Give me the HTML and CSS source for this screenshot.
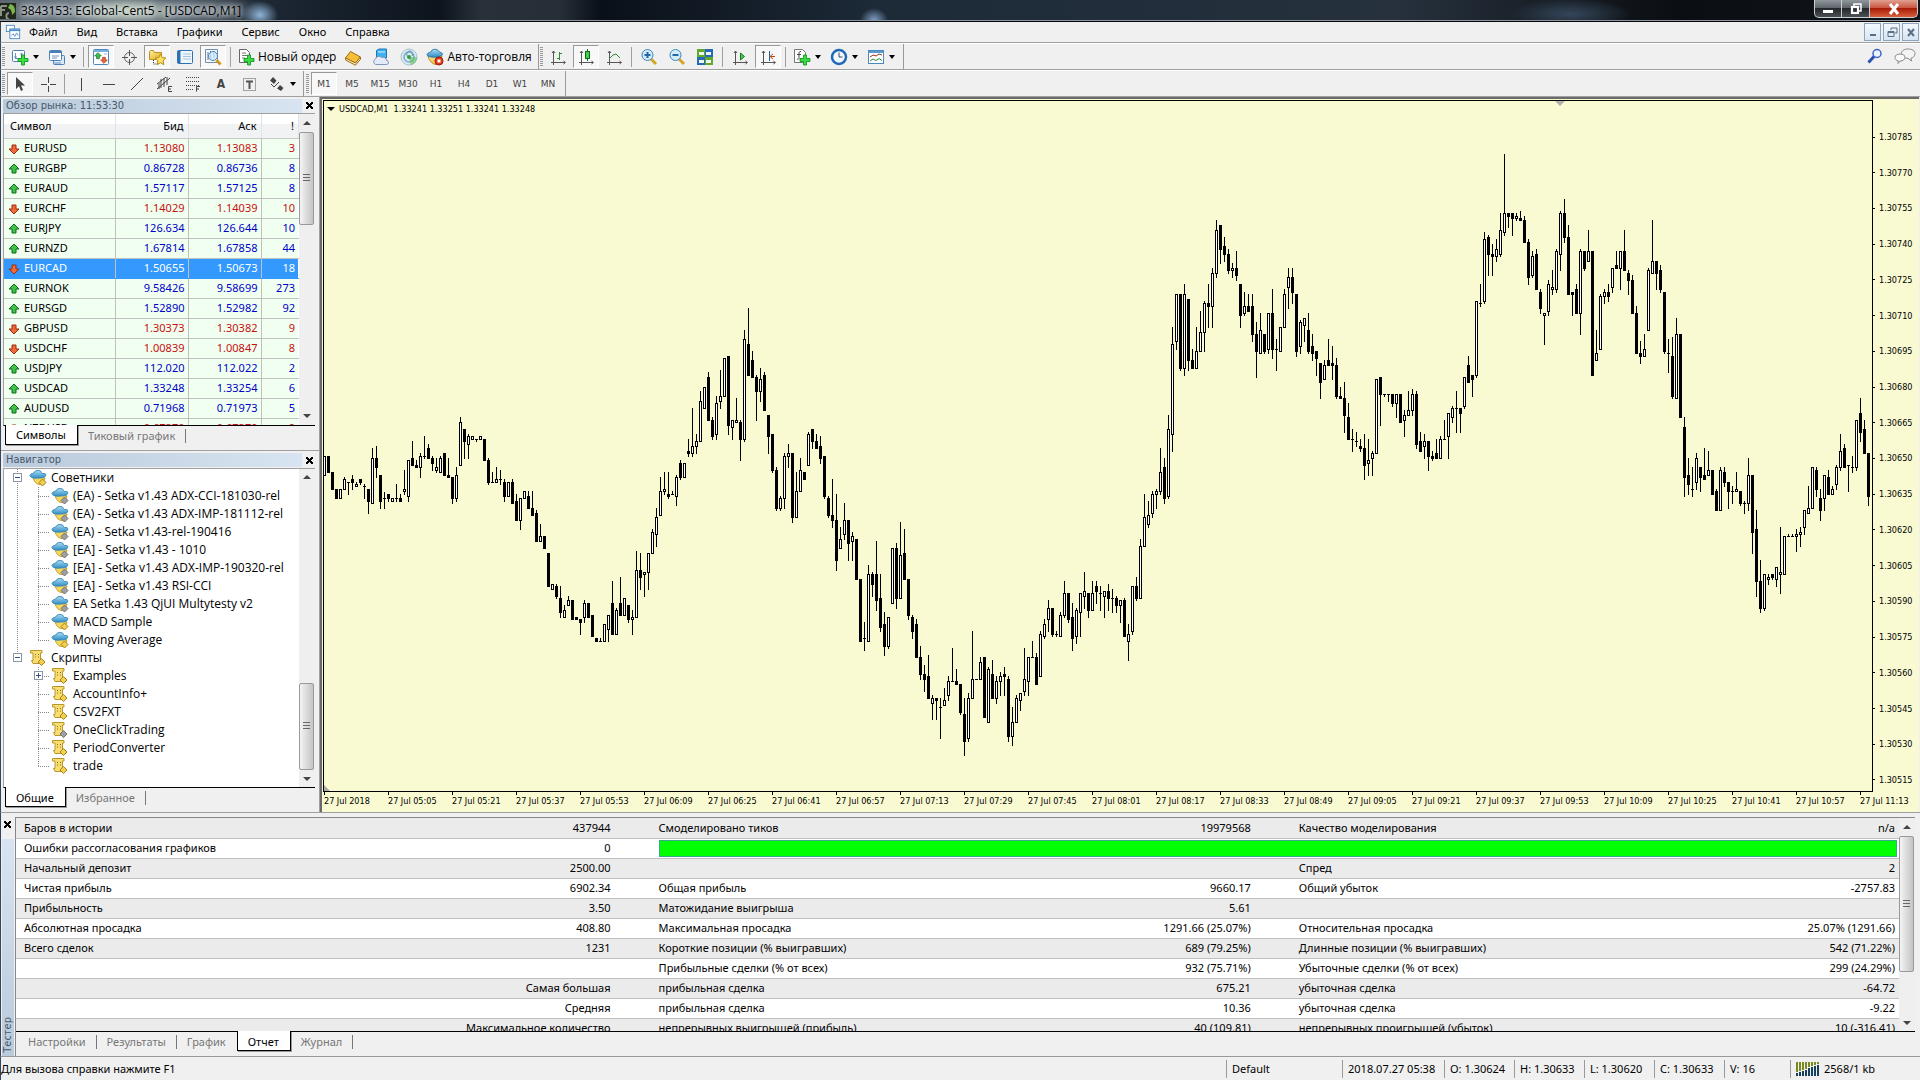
FILE: index.html
```html
<!DOCTYPE html>
<html lang="ru">
<head>
<meta charset="utf-8">
<title>3843153: EGlobal-Cent5 - [USDCAD,M1]</title>
<link rel="stylesheet" href="styles.css">
</head>
<body>
<svg class="defs" width="0" height="0" aria-hidden="true">
  <defs>
    <linearGradient id="gold" x1="0" y1="0" x2="1" y2="1"><stop offset="0" stop-color="#fff0a0"/><stop offset="1" stop-color="#e0a820"/></linearGradient>
    <linearGradient id="sky" x1="0" y1="0" x2="0" y2="1"><stop offset="0" stop-color="#a9dcf5"/><stop offset="1" stop-color="#2f8cc4"/></linearGradient>
    <symbol id="i-up" viewBox="0 0 12 12"><path d="M6 1 11 6H8v4H4V6H1z" fill="#3fc14a" stroke="#0d6b1a"/></symbol>
    <symbol id="i-down" viewBox="0 0 12 12"><path d="M6 11 1 6h3V2h4v4h3z" fill="#ef6a3a" stroke="#9c2c0c"/></symbol>
    <symbol id="i-plus" viewBox="0 0 12 12"><path d="M4.500 1h3v3.500H11v3H7.500V11h-3V7.500H1v-3h3.500z" fill="#35e040" stroke="#0a8a18" stroke-width=".8"/></symbol>
    <symbol id="i-chartwin" viewBox="0 0 18 18"><rect x="1.500" y="2.500" width="12" height="11" rx="1" fill="#fff" stroke="#4a80b8"/><path d="M4.500 5v6M3 9h3M4 10.500h8M10.500 5v6M9 6h3" stroke="#6a94c0" fill="none"/></symbol>
    <symbol id="i-newchart" viewBox="0 0 18 18"><use href="#i-chartwin" width="18" height="18"/><use href="#i-plus" x="6" y="6" width="12" height="12"/></symbol>
    <symbol id="i-profiles" viewBox="0 0 18 18"><rect x="5.500" y="7.500" width="11" height="9" rx="1" fill="#dbe9f8" stroke="#4a80b8"/><rect x="1.500" y="2.500" width="12" height="10" rx="1" fill="#fff" stroke="#4a80b8"/><path d="M1.500 4h12" stroke="#4a80b8" stroke-width="2"/><path d="M4 8h7M4 10h5M5 15h8" stroke="#6a94c0"/></symbol>
    <symbol id="i-market" viewBox="0 0 18 18"><rect x="1.500" y="1.500" width="15" height="15" rx="1" fill="#fff" stroke="#4a88c0"/><path d="M1.500 3h15" stroke="#7ab0dc" stroke-width="2"/><path d="M4 6h2M4 9h2M12 6h3M12 13h2" stroke="#9ab8d0"/><use href="#i-up" x="2" y="4" width="8" height="8"/><use href="#i-down" x="8" y="8" width="8" height="8"/></symbol>
    <symbol id="i-target" viewBox="0 0 18 18"><circle cx="9.500" cy="9.500" r="5" fill="none" stroke="#666"/><path d="M9.500 2v6M9.500 11v6M2 9.500h6M11 9.500h6" stroke="#555"/></symbol>
    <symbol id="i-navigator" viewBox="0 0 18 18"><path d="M1.500 3.500v8h12v-7h-7l-1-2h-3z" fill="url(#gold)" stroke="#c09020"/><path d="M5.500 12v4h4" fill="none" stroke="#333" stroke-dasharray="1 1"/><path d="m12.500 6 1.700 3.600 3.600.4-2.700 2.700.7 4-3.300-2-3.300 2 .7-4L7 10l3.800-.4z" fill="#ffe066" stroke="#b88a10"/></symbol>
    <symbol id="i-terminal" viewBox="0 0 18 18"><rect x="1.500" y="2.500" width="15" height="13" rx="1" fill="#eef6fd" stroke="#2f70b0"/><path d="M3 3v12" stroke="#2f70b0" stroke-width="3"/><path d="M7 6h8M7 8.500h8M7 11h8" stroke="#a8c4dc"/></symbol>
    <symbol id="i-tester" viewBox="0 0 18 18"><path d="M1.500 1.500h12v13h-12z" fill="#f4f8fc" stroke="#7090b0"/><path d="M4 4v8M6.500 3v7M10 3v7" stroke="#5a7a9a"/><circle cx="9" cy="8" r="4.500" fill="#cfe8fa" fill-opacity=".8" stroke="#4c88bc"/><path d="m12.500 12 4 4.500" stroke="#d49a20" stroke-width="3"/></symbol>
    <symbol id="i-order" viewBox="0 0 18 18"><path d="M2.500 1.500h7l3 3v10h-10z" fill="#fff" stroke="#666"/><path d="M5 5h4M5 7.500h5M5 10h3" stroke="#777"/><use href="#i-plus" x="6" y="6" width="12" height="12"/></symbol>
    <symbol id="i-book" viewBox="0 0 18 18"><path d="m1.500 10 5-6.500 10 5.500-5 6z" fill="#f5bf3a" stroke="#a06a10"/><path d="m1.500 10 .3 2.200 9.700 5 5-6V9l-5 6z" fill="#fff3c8" stroke="#a06a10"/></symbol>
    <symbol id="i-cloud" viewBox="0 0 18 18"><path d="M4.500 2.500 7 1h7.500v9h-10z" fill="#3fb0f0" stroke="#1a78b8"/><path d="M6 4h7" stroke="#d8f0ff"/><path d="M3.500 16.500a3 3 0 0 1 0-5.500 3.500 3.500 0 0 1 6-1.500 3.500 3.500 0 0 1 5 3 2 2 0 0 1 0 4z" fill="#e3ebf8" stroke="#7f96bd"/></symbol>
    <symbol id="i-signal" viewBox="0 0 18 18"><circle cx="9" cy="9" r="8" fill="#dceaf0" stroke="#a8c4d4"/><circle cx="9" cy="9" r="5" fill="none" stroke="#7aaccc" stroke-width="1.500"/><path d="M9 9a3 3 0 1 1 3-1" fill="none" stroke="#5a90b4"/><path d="M9 9c0 3 1 5 2 8 4-1 6-4 6-8" fill="#6cc070" fill-opacity=".7"/><circle cx="9" cy="9" r="2" fill="#2e9e40"/></symbol>
    <symbol id="i-auto" viewBox="0 0 18 18"><path d="M2 8c1 5 5 8.500 8 8.500s5-4 6-8.500z" fill="url(#gold)" stroke="#b88a20"/><path d="M1 6.500C2 4 5 5 5.500 3S11 .5 12.500 3s4 1 4 3.500S2 11 1 6.500z" fill="url(#sky)" stroke="#2878a8"/><circle cx="13" cy="13" r="4" fill="#e03a1c" stroke="#a01c08"/><rect x="11.500" y="11.500" width="3" height="3" fill="#fff"/></symbol>
    <symbol id="i-axes" viewBox="0 0 18 18"><path d="M4.500 3v14M2 14.500h14M3 5l1.500-2L6 5M14.500 13l2 1.500-2 1.500" fill="none" stroke="#555"/></symbol>
    <symbol id="i-bars" viewBox="0 0 18 18"><use href="#i-axes" width="18" height="18"/><path d="M10.500 4v8M8 10.500h2.500M10.500 5.500H13" stroke="#2d8a35" fill="none"/></symbol>
    <symbol id="i-candle" viewBox="0 0 18 18"><use href="#i-axes" width="18" height="18"/><path d="M10.500 1v12" stroke="#0c6a18"/><rect x="8.500" y="3.500" width="4" height="7" fill="#3cd04a" stroke="#0c6a18"/></symbol>
    <symbol id="i-line" viewBox="0 0 18 18"><use href="#i-axes" width="18" height="18"/><path d="m4 11 4-4 3-1 4 4" stroke="#2d8a35" fill="none"/></symbol>
    <symbol id="i-zoomin" viewBox="0 0 18 18"><path d="m11 11 5 5" stroke="#d4a52c" stroke-width="3"/><circle cx="7.500" cy="7" r="5.500" fill="#d4ecfa" stroke="#3f86c0"/><path d="M4.500 7h6M7.500 4v6" stroke="#2068a8" stroke-width="2"/></symbol>
    <symbol id="i-zoomout" viewBox="0 0 18 18"><path d="m11 11 5 5" stroke="#d4a52c" stroke-width="3"/><circle cx="7.500" cy="7" r="5.500" fill="#d4ecfa" stroke="#3f86c0"/><path d="M4.500 7h6" stroke="#2068a8" stroke-width="2"/></symbol>
    <symbol id="i-tile" viewBox="0 0 18 18"><path d="M1 1h8v8H1z" fill="#62a82a"/><path d="M9 1h8v8H9z" fill="#2868b8"/><path d="M1 9h8v8H1z" fill="#2868b8"/><path d="M9 9h8v8H9z" fill="#62a82a"/><path d="M3 4h5v3H3zM10 4h5v3h-5zM3 12h5v3H3zM10 12h5v3h-5z" fill="#f0f6f0"/></symbol>
    <symbol id="i-scroll" viewBox="0 0 18 18"><use href="#i-axes" width="18" height="18"/><path d="m9.500 5 4 3.500-4 3.500z" fill="#4cc858" stroke="#157a20"/></symbol>
    <symbol id="i-shift" viewBox="0 0 18 18"><use href="#i-axes" width="18" height="18"/><path d="M10.500 3v10" stroke="#2060a0"/><path d="M16 8.500h-4M14 6l-3 2.500 3 2.500" stroke="#c04010" fill="none"/></symbol>
    <symbol id="i-indic" viewBox="0 0 18 18"><path d="M1.500 1.500h8l3 3v10h-11z" fill="#fff" stroke="#777"/><path d="M8 3.500c-2-.5-2 1-2 3v3c0 2-1 2-2 1.500M4 6.500h4" stroke="#444" fill="none"/><use href="#i-plus" x="6" y="6" width="12" height="12"/></symbol>
    <symbol id="i-clock" viewBox="0 0 18 18"><circle cx="9" cy="9" r="7" fill="#f2f8ff" stroke="#1f68b4" stroke-width="2.500"/><path d="M9 4.500V9h3.500" stroke="#444" fill="none"/></symbol>
    <symbol id="i-template" viewBox="0 0 18 18"><rect x="1.500" y="2.500" width="15" height="13" fill="#fff" stroke="#4a88c0"/><path d="M1.500 4h15" stroke="#5a9ad0" stroke-width="2"/><path d="m3 9 3-2 3 1 3-2 3 1" stroke="#a03018" fill="none"/><path d="m3 13 3-2 3 1.500 3-2 3 2" stroke="#2d8a35" fill="none"/></symbol>
    <symbol id="i-cursor" viewBox="0 0 18 18"><path d="M5 2v12l3-2.800 2 4.800 2-1-2-4.600h4z" fill="#444"/></symbol>
    <symbol id="i-cross" viewBox="0 0 18 18"><path d="M9.500 2v6M9.500 11v6M2 9.500h6M11 9.500h6" stroke="#444"/></symbol>
    <symbol id="i-vline" viewBox="0 0 18 18"><path d="M9.500 3v13" stroke="#444"/></symbol>
    <symbol id="i-hline" viewBox="0 0 18 18"><path d="M3 9.500h12" stroke="#444"/></symbol>
    <symbol id="i-trend" viewBox="0 0 18 18"><path d="M3 15 15 3" stroke="#444"/></symbol>
    <symbol id="i-channel" viewBox="0 0 18 18"><path d="M1 9 10 2M1 14 14 3M5 4v9M8 3v9M11 2v8M3 8v6" stroke="#444"/><path d="M16 11.500h-3.500v5H16M12.500 14H15" stroke="#444" fill="none"/></symbol>
    <symbol id="i-fibo" viewBox="0 0 18 18"><path d="M2 2.500h14M2 6.500h14M2 10.500h14M2 14.500h8" stroke="#444" stroke-dasharray="1 1"/><path d="M16 11.500h-3.500v5M12.500 14H15" stroke="#444" fill="none"/></symbol>
    <symbol id="i-label" viewBox="0 0 18 18"><rect x="3.500" y="3.500" width="12" height="12" fill="none" stroke="#555" stroke-dasharray="1 1"/><path d="M6 6.500h7M9.500 6v8" stroke="#555" stroke-width="2" fill="none"/></symbol>
    <symbol id="i-shapes" viewBox="0 0 18 18"><path d="m5 2 3.500 3.500L6 9 2 5.500zM12 10l3.500 3L13 16l-4-2.500z" fill="#444"/><path d="m3 9 3 3 5-5" stroke="#444" fill="none"/></symbol>
    <symbol id="i-search" viewBox="0 0 18 18"><circle cx="11" cy="6.500" r="4" fill="#eef4ff" stroke="#3a66c8" stroke-width="1.500"/><path d="m8 9.500-5.500 6" stroke="#2a4fb0" stroke-width="3"/></symbol>
    <symbol id="i-chat" viewBox="0 0 22 18"><path d="M14 2c4 0 7 1.800 7 4.500S18.500 11 17 11.200L17.500 14 14 11.300c-4 0-6.500-2-6.500-4.800S10 2 14 2z" fill="#f4f4f4" stroke="#888"/><path d="M6 7c3 0 5 1.400 5 3.400S9 14 6 14l-2 2.500.2-2.700C2 13.500 1 12 1 10.400 1 8.400 3 7 6 7z" fill="#fafafa" stroke="#888"/></symbol>
    <symbol id="i-ea" viewBox="0 0 18 18"><path d="M4 8c1 5 4 7.500 7 7.500 2 0 4-3 5-6.500z" fill="#f6d85a" stroke="#c09a28"/><path d="M1 6.500C1.500 4 5 5 5.500 3S11 1 12 2.500 12.500 5 15 4.500s2.500 3.500-1 4S2 10.500 1 6.500z" fill="url(#sky)" stroke="#3a8cba"/><path d="m13.500 10 3.500 3.500-3.500 3.500L10 13.500z" fill="var(--mark)" stroke="var(--edge)"/></symbol>
    <symbol id="i-script" viewBox="0 0 18 18"><path d="M1.500 1.500h11.500v2.500h-1.500v7h2.500v3.500H4L2.500 11.500H4V4H1.500z" fill="#f7dd72" stroke="#b8962a"/><path d="M6 5.500h1M9 5.500h1M6 8h1M9 8h1" stroke="#906c10"/><path d="m12.500 9.500 3.500 3.500-3.500 3.500L9 13z" fill="var(--mark)" stroke="var(--edge)"/></symbol>
  </defs>
</svg>

<div class="app">
  <header class="titlebar">
    <svg class="logo" viewBox="0 0 16 16" aria-hidden="true"><path d="M0 0h16v16H0z" fill="#20261c"/><path d="M1 3h6M1 3v10M1 7h4M9 10c-3 0-4 6 0 6" stroke="#8a9284" stroke-width="2" fill="none"/><path d="M10 1c4 1 5 3 5 8l-3 3c0-5-2-6-4-7z" fill="#7ab648"/></svg>
    <h1>3843153: EGlobal-Cent5 - [USDCAD,M1]</h1>
    <div class="caption">
      <button aria-label="Свернуть"><svg viewBox="0 0 12 12"><path d="M1 7h10v3H1z" fill="#fff"/></svg></button>
      <button aria-label="Развернуть"><svg viewBox="0 0 12 12"><path d="M4 3V1h7v7H9" stroke="#fff" stroke-width="1.500" fill="none"/><rect x="2" y="4" width="6" height="6" stroke="#fff" stroke-width="2.200" fill="none"/></svg></button>
      <button class="close" aria-label="Закрыть"><svg viewBox="0 0 12 12"><path d="m2 1 8 10M10 1 2 11" stroke="#fff" stroke-width="3"/></svg></button>
    </div>
  </header>

  <nav class="menubar">
    <svg class="icon16" viewBox="0 0 18 18" aria-hidden="true"><rect x="1.500" y="1.500" width="9" height="7" fill="#fff" stroke="#4a88c8"/><rect x="5.500" y="5.500" width="11" height="11" fill="#fff" stroke="#4a88c8"/><path d="M5 7h12" stroke="#4a88c8" stroke-width="2"/><path d="m7 13 2-2 2 3 2-4 2 3" stroke="#4a88c8" fill="none"/></svg>
    <a href="#">Файл</a><a href="#">Вид</a><a href="#">Вставка</a><a href="#">Графики</a><a href="#">Сервис</a><a href="#">Окно</a><a href="#">Справка</a>
    <div class="mdi">
      <button aria-label="Свернуть график"><svg viewBox="0 0 12 12"><path d="M3 8h6v2H3z" fill="#5a6e82"/></svg></button>
      <button aria-label="Восстановить график"><svg viewBox="0 0 12 12"><path d="M5 4V2h6v5H9M2 5.500h6v5H2zM2 6.500h6" stroke="#5a6e82" fill="none"/></svg></button>
      <button aria-label="Закрыть график"><svg viewBox="0 0 12 12"><path d="m3 3 6 7M9 3l-6 7" stroke="#5a6e82" stroke-width="2"/></svg></button>
    </div>
  </nav>

  <div class="toolrow">
    <div class="toolbar">
      <span class="grip"></span>
      <button class="drop" aria-label="Новый график"><svg><use href="#i-newchart"/></svg></button>
      <button class="drop" aria-label="Профили"><svg><use href="#i-profiles"/></svg></button>
      <span class="sep"></span>
      <button class="on" aria-label="Обзор рынка"><svg><use href="#i-market"/></svg></button>
      <button aria-label="Окно данных"><svg><use href="#i-target"/></svg></button>
      <button class="on" aria-label="Навигатор"><svg><use href="#i-navigator"/></svg></button>
      <button aria-label="Терминал"><svg><use href="#i-terminal"/></svg></button>
      <button class="on" aria-label="Тестер стратегий"><svg><use href="#i-tester"/></svg></button>
      <span class="sep"></span>
      <button class="wide"><svg><use href="#i-order"/></svg>Новый ордер</button>
      <button aria-label="MetaEditor"><svg><use href="#i-book"/></svg></button>
      <button aria-label="Маркет"><svg><use href="#i-cloud"/></svg></button>
      <button aria-label="Сигналы"><svg><use href="#i-signal"/></svg></button>
      <button class="wide"><svg><use href="#i-auto"/></svg>Авто-торговля</button>
    </div>
    <div class="toolbar">
      <span class="grip"></span>
      <button aria-label="Бары"><svg><use href="#i-bars"/></svg></button>
      <button class="on" aria-label="Японские свечи"><svg><use href="#i-candle"/></svg></button>
      <button aria-label="Линия"><svg><use href="#i-line"/></svg></button>
      <span class="sep"></span>
      <button aria-label="Увеличить"><svg><use href="#i-zoomin"/></svg></button>
      <button aria-label="Уменьшить"><svg><use href="#i-zoomout"/></svg></button>
      <button aria-label="Окна мозаикой"><svg><use href="#i-tile"/></svg></button>
      <span class="sep"></span>
      <button aria-label="Автопрокрутка"><svg><use href="#i-scroll"/></svg></button>
      <button class="on" aria-label="Сдвиг графика"><svg><use href="#i-shift"/></svg></button>
      <span class="sep"></span>
      <button class="drop" aria-label="Индикаторы"><svg><use href="#i-indic"/></svg></button>
      <button class="drop" aria-label="Периоды"><svg><use href="#i-clock"/></svg></button>
      <button class="drop" aria-label="Шаблоны"><svg><use href="#i-template"/></svg></button>
    </div>
    <div class="corner">
      <button aria-label="Поиск"><svg><use href="#i-search"/></svg></button>
      <button class="chat" aria-label="Чат"><svg><use href="#i-chat"/></svg></button>
    </div>
  </div>

  <div class="toolrow tight">
    <div class="toolbar">
      <span class="grip"></span>
      <button class="on" aria-label="Курсор"><svg><use href="#i-cursor"/></svg></button>
      <button aria-label="Перекрестие"><svg><use href="#i-cross"/></svg></button>
      <span class="sep"></span>
      <button aria-label="Вертикальная линия"><svg><use href="#i-vline"/></svg></button>
      <button aria-label="Горизонтальная линия"><svg><use href="#i-hline"/></svg></button>
      <button aria-label="Трендовая линия"><svg><use href="#i-trend"/></svg></button>
      <button aria-label="Канал"><svg><use href="#i-channel"/></svg></button>
      <button aria-label="Фибоначчи"><svg><use href="#i-fibo"/></svg></button>
      <button class="letter">A</button>
      <button aria-label="Метка"><svg><use href="#i-label"/></svg></button>
      <button class="drop" aria-label="Стрелки"><svg><use href="#i-shapes"/></svg></button>
    </div>
    <div class="toolbar frames">
      <span class="grip"></span>
      <button class="on">M1</button><button>M5</button><button>M15</button><button>M30</button><button>H1</button><button>H4</button><button>D1</button><button>W1</button><button>MN</button>
    </div>
  </div>

  <main class="work">
    <aside class="dock">
      <section class="panel">
        <header class="paneltitle"><h2>Обзор рынка: 11:53:30</h2><button class="x" aria-label="Закрыть панель"></button></header>
        <div class="body">
          <div class="view">
            <table class="quotes">
              <colgroup><col class="c-sym"><col class="c-bid"><col class="c-bid"><col></colgroup>
              <thead><tr><th>Символ</th><th>Бид</th><th>Аск</th><th>!</th></tr></thead>
              <tbody>
                <tr class="down"><td><svg><use href="#i-down"/></svg>EURUSD</td><td>1.13080</td><td>1.13083</td><td>3</td></tr>
                <tr><td><svg><use href="#i-up"/></svg>EURGBP</td><td>0.86728</td><td>0.86736</td><td>8</td></tr>
                <tr><td><svg><use href="#i-up"/></svg>EURAUD</td><td>1.57117</td><td>1.57125</td><td>8</td></tr>
                <tr class="down"><td><svg><use href="#i-down"/></svg>EURCHF</td><td>1.14029</td><td>1.14039</td><td>10</td></tr>
                <tr><td><svg><use href="#i-up"/></svg>EURJPY</td><td>126.634</td><td>126.644</td><td>10</td></tr>
                <tr><td><svg><use href="#i-up"/></svg>EURNZD</td><td>1.67814</td><td>1.67858</td><td>44</td></tr>
                <tr class="sel"><td><svg><use href="#i-down"/></svg>EURCAD</td><td>1.50655</td><td>1.50673</td><td>18</td></tr>
                <tr><td><svg><use href="#i-up"/></svg>EURNOK</td><td>9.58426</td><td>9.58699</td><td>273</td></tr>
                <tr><td><svg><use href="#i-up"/></svg>EURSGD</td><td>1.52890</td><td>1.52982</td><td>92</td></tr>
                <tr class="down"><td><svg><use href="#i-down"/></svg>GBPUSD</td><td>1.30373</td><td>1.30382</td><td>9</td></tr>
                <tr class="down"><td><svg><use href="#i-down"/></svg>USDCHF</td><td>1.00839</td><td>1.00847</td><td>8</td></tr>
                <tr><td><svg><use href="#i-up"/></svg>USDJPY</td><td>112.020</td><td>112.022</td><td>2</td></tr>
                <tr><td><svg><use href="#i-up"/></svg>USDCAD</td><td>1.33248</td><td>1.33254</td><td>6</td></tr>
                <tr><td><svg><use href="#i-up"/></svg>AUDUSD</td><td>0.71968</td><td>0.71973</td><td>5</td></tr>
                <tr class="down"><td><svg><use href="#i-down"/></svg>NZDUSD</td><td>0.67370</td><td>0.67379</td><td>9</td></tr>
              </tbody>
            </table>
          </div>
          <div class="scroll"><i class="arrow"></i><div class="track"><i class="thumb t-quotes"></i></div><i class="arrow dn"></i></div>
        </div>
        <div class="tabs"><button class="active">Символы</button><button>Тиковый график</button></div>
      </section>

      <section class="panel">
        <header class="paneltitle"><h2>Навигатор</h2><button class="x" aria-label="Закрыть панель"></button></header>
        <div class="body">
          <div class="view">
            <ul class="tree">
              <li class="root"><div class="node"><span class="box"></span><svg><use href="#i-ea"/></svg>Советники</div>
                <ul>
                  <li class="off"><svg><use href="#i-ea"/></svg>(EA) - Setka v1.43 ADX-CCI-181030-rel</li>
                  <li class="off"><svg><use href="#i-ea"/></svg>(EA) - Setka v1.43 ADX-IMP-181112-rel</li>
                  <li class="off"><svg><use href="#i-ea"/></svg>(EA) - Setka v1.43-rel-190416</li>
                  <li class="off"><svg><use href="#i-ea"/></svg>[EA] - Setka v1.43 - 1010</li>
                  <li class="off"><svg><use href="#i-ea"/></svg>[EA] - Setka v1.43 ADX-IMP-190320-rel</li>
                  <li class="off"><svg><use href="#i-ea"/></svg>[EA] - Setka v1.43 RSI-CCI</li>
                  <li class="off"><svg><use href="#i-ea"/></svg>EA Setka 1.43 QjUI Multytesty v2</li>
                  <li><svg><use href="#i-ea"/></svg>MACD Sample</li>
                  <li><svg><use href="#i-ea"/></svg>Moving Average</li>
                </ul>
              </li>
              <li class="root last"><div class="node"><span class="box"></span><svg><use href="#i-script"/></svg>Скрипты</div>
                <ul>
                  <li class="folder"><span class="box plus"></span><svg><use href="#i-script"/></svg>Examples</li>
                  <li><svg><use href="#i-script"/></svg>AccountInfo+</li>
                  <li><svg><use href="#i-script"/></svg>CSV2FXT</li>
                  <li class="off"><svg><use href="#i-script"/></svg>OneClickTrading</li>
                  <li><svg><use href="#i-script"/></svg>PeriodConverter</li>
                  <li><svg><use href="#i-script"/></svg>trade</li>
                </ul>
              </li>
            </ul>
          </div>
          <div class="scroll"><i class="arrow"></i><div class="track end"><i class="thumb t-nav"></i></div><i class="arrow dn"></i></div>
        </div>
        <div class="tabs"><button class="active">Общие</button><button>Избранное</button></div>
      </section>
    </aside>

    <section class="chart">
      <div class="plot">
        <p class="legend">USDCAD,M1&nbsp; 1.33241 1.33251 1.33241 1.33248</p>
        <svg id="candles" class="candles" role="img" aria-label="USDCAD M1"></svg>
        <i class="shiftmark"></i><i class="startmark"></i>
      </div>
      <div class="prices" id="prices"></div>
      <div class="times" id="times"></div>
    </section>
  </main>

  <section class="tester">
    <div class="side"><button class="x" aria-label="Закрыть тестер"></button><h2>Тестер</h2></div>
    <div class="report">
      <div class="body">
        <div class="view">
          <table class="stats">
            <colgroup><col class="s1"><col class="s2"><col class="s3"><col class="s4"><col class="s5"><col class="s6"></colgroup>
            <tbody>
              <tr><td>Баров в истории</td><td>437944</td><td>Смоделировано тиков</td><td>19979568</td><td>Качество моделирования</td><td>n/a</td></tr>
              <tr><td>Ошибки рассогласования графиков</td><td>0</td><td class="quality" colspan="4"><div class="bar"></div></td></tr>
              <tr><td>Начальный депозит</td><td>2500.00</td><td></td><td></td><td>Спред</td><td>2</td></tr>
              <tr><td>Чистая прибыль</td><td>6902.34</td><td>Общая прибыль</td><td>9660.17</td><td>Общий убыток</td><td>-2757.83</td></tr>
              <tr><td>Прибыльность</td><td>3.50</td><td>Матожидание выигрыша</td><td>5.61</td><td></td><td></td></tr>
              <tr><td>Абсолютная просадка</td><td>408.80</td><td>Максимальная просадка</td><td>1291.66 (25.07%)</td><td>Относительная просадка</td><td>25.07% (1291.66)</td></tr>
              <tr><td>Всего сделок</td><td>1231</td><td>Короткие позиции (% выигравших)</td><td>689 (79.25%)</td><td>Длинные позиции (% выигравших)</td><td>542 (71.22%)</td></tr>
              <tr><td></td><td></td><td>Прибыльные сделки (% от всех)</td><td>932 (75.71%)</td><td>Убыточные сделки (% от всех)</td><td>299 (24.29%)</td></tr>
              <tr><td></td><td>Самая большая</td><td>прибыльная сделка</td><td>675.21</td><td>убыточная сделка</td><td>-64.72</td></tr>
              <tr><td></td><td>Средняя</td><td>прибыльная сделка</td><td>10.36</td><td>убыточная сделка</td><td>-9.22</td></tr>
              <tr><td></td><td>Максимальное количество</td><td>непрерывных выигрышей (прибыль)</td><td>40 (109.81)</td><td>непрерывных проигрышей (убыток)</td><td>10 (-316.41)</td></tr>
            </tbody>
          </table>
        </div>
        <div class="scroll"><i class="arrow"></i><div class="track"><i class="thumb t-report"></i></div><i class="arrow dn"></i></div>
      </div>
      <div class="tabs"><button>Настройки</button><button>Результаты</button><button class="before">График</button><button class="active">Отчет</button><button>Журнал</button></div>
    </div>
  </section>

  <footer class="status">
    <span class="hint">Для вызова справки нажмите F1</span>
    <span class="w-profile">Default</span>
    <span class="w-date">2018.07.27 05:38</span>
    <span class="w-price">O: 1.30624</span>
    <span class="w-price">H: 1.30633</span>
    <span class="w-price">L: 1.30620</span>
    <span class="w-price">C: 1.30633</span>
    <span class="w-vol">V: 16</span>
    <span class="w-net"><svg viewBox="0 0 24 14" aria-hidden="true"><path d="M1 0v10M4 0v9M7 0v8M10 0v7M13 0v5M16 0v4M19 0v3M22 0v2" stroke="#7a8a20" stroke-width="2"/><path d="M1 11v3M4 10v4M7 9v5M10 8v6M13 6v8M16 5v9M19 4v10M22 3v11" stroke="#16405c" stroke-width="2"/></svg>2568/1 kb</span>
  </footer>
</div>
<script src="chart.js"></script>
</body>
</html>
```
FILE: styles.css
```css
* { box-sizing: border-box; }

html, body { height: 100%; }

body {
  margin: 0;
  background: #f0f0f0;
  color: #000;
  font: 11px/16px "Noto Sans", "Open Sans", sans-serif;
}

button {
  margin: 0;
  padding: 0;
  border: 0;
  background: none;
  color: inherit;
  font: inherit;
}

h1, h2, p, ul { margin: 0; padding: 0; font-size: inherit; font-weight: normal; }
ul { list-style: none; }
i { display: block; }
.defs { position: absolute; }

/* Window caption, captioned buttons, tree */
.titlebar h1, .wide, .tree {
  font-family: "Open Sans", "Noto Sans", sans-serif;
  font-size: 12px;
}

.app {
  display: flex;
  flex-direction: column;
  height: 100vh;
  min-height: 700px;
  overflow: hidden;
}

/* Title bar */
.titlebar {
  display: flex;
  flex: none;
  align-items: center;
  height: 22px;
  border-bottom: 1px solid #05070a;
  box-shadow: inset 0 -1px #8d949b;
  background:
    radial-gradient(ellipse 18px 14px at 260px 15px, #8fb4d8, transparent),
    radial-gradient(ellipse 14px 12px at 874px 20px, #7d9cc0, transparent),
    radial-gradient(ellipse 60px 14px at 125px 11px, #b9c7b0, transparent),
    radial-gradient(ellipse 150px 22px at 120px 10px, #8c99a4, transparent),
    radial-gradient(ellipse 60px 16px at 1570px 14px, #34465a, transparent),
    linear-gradient(90deg, #55616b, #1b2632 280px, #0d141d 440px, #28303a 480px, #262e38 560px, #0a1018 600px, #1d2a38 880px, #26313d 1400px, #0b0e12 1680px, #101418);
}
.logo { width: 16px; height: 16px; }
.titlebar h1 {
  flex: 1;
  padding-left: 5px;
  text-shadow: 0 0 4px #fff, 0 0 8px #dfe6ea, 0 0 10px #c8d0d6;
}
.caption { display: flex; align-self: flex-start; margin-right: 2px; }
.caption button {
  display: grid;
  place-items: center;
  width: 28px;
  height: 18px;
  border: 1px solid #c9ced2;
  border-top: 0;
  border-left-width: 0;
  background: linear-gradient(#8f969c, #5a6066 50%, #24282c 50%, #4a5056);
}
.caption button:first-child { border-left-width: 1px; border-radius: 0 0 0 5px; }
.caption svg { width: 12px; height: 12px; }
.caption .close {
  width: 48px;
  border-radius: 0 0 5px 0;
  background: linear-gradient(#e0a090, #c8503a 50%, #a81c08 50%, #d8603c);
}

/* Menu */
.menubar {
  display: flex;
  flex: none;
  gap: 1px;
  align-items: center;
  height: 21px;
  padding-left: 4px;
  border-bottom: 1px solid #a0a0a0;
  border-left: 1px solid #33475c;
}
.menubar a { padding: 0 9px; color: #000; text-decoration: none; }
.icon16 { width: 16px; height: 16px; margin-right: -2px; }
.mdi { display: flex; gap: 2px; margin: 0 1px 0 auto; }
.mdi button {
  display: grid;
  place-items: center;
  width: 17px;
  height: 18px;
  border: 1px solid #8fa5bc;
  background: linear-gradient(#f2f8fd, #d6e5f4);
}
.mdi svg { width: 12px; height: 12px; }

/* Toolbars */
.toolrow {
  display: flex;
  flex: none;
  height: 27px;
  padding-top: 1px;
  border-bottom: 1px solid #a0a0a0;
  border-left: 1px solid #33475c;
  box-shadow: inset 0 1px #fff;
}
.toolbar {
  display: flex;
  align-items: center;
  gap: 2px;
  padding: 0 4px 0 1px;
  border-right: 1px solid #999;
}
.frames { padding-left: 2px; }
.grip {
  width: 3px;
  height: 20px;
  background: repeating-linear-gradient(#999 0 1px, transparent 1px 2px);
}
.sep { width: 1px; height: 20px; margin: 0 2px; background: #a0a0a0; }
.tight .sep { margin: 0 1px; }
.toolbar button, .corner button {
  display: flex;
  align-items: center;
  justify-content: center;
  width: 26px;
  height: 23px;
}
.toolbar svg, .corner svg { flex: none; width: 18px; height: 18px; }
.toolbar .on {
  border: 1px solid #fff;
  border-top-color: #999;
  border-left-color: #999;
  background: #f8f8f8;
}
.toolbar .drop { gap: 4px; width: 35px; }
.drop::after {
  content: "";
  border: 3px solid transparent;
  border-top: 4px solid #000;
  border-bottom: 0;
}
.toolbar .wide { gap: 3px; width: auto; padding: 0 2px; white-space: nowrap; }
.toolbar .letter { color: #444; font: bold 12px "DejaVu Sans Condensed", sans-serif; }
.frames button { color: #444; font: 9px "DejaVu Sans", sans-serif; }
.corner { display: flex; margin-left: auto; }
.corner .chat { width: 30px; margin-left: 2px; }
.corner .chat svg { width: 22px; }

/* Work area */
.work {
  display: flex;
  flex: 1;
  min-height: 0;
  border-bottom: 1px solid #a0a0a0;
  border-left: 1px solid #33475c;
}
.dock {
  display: grid;
  flex: none;
  grid-template-rows: 353fr 363fr;
  width: 319px;
  min-height: 0;
}
.panel {
  display: flex;
  flex-direction: column;
  min-height: 0;
  padding: 1px 4px 0 2px;
  border-right: 1px solid #a0a0a0;
}
.panel + .panel { border-top: 1px solid #a0a0a0; padding-top: 2px; }
.paneltitle { display: flex; flex: none; align-items: center; height: 15px; margin-right: -2px; }
.paneltitle h2 {
  flex: 1;
  padding-left: 3px;
  background: linear-gradient(90deg, #b9cadb, #d8e4f1);
  color: #46586b;
  font-family: "DejaVu Sans Condensed", sans-serif;
  line-height: 14px;
}
.x {
  width: 15px;
  height: 14px;
  background:
    linear-gradient(45deg, transparent 42%, #000 42% 60%, transparent 60%) center / 7px 7px no-repeat,
    linear-gradient(-45deg, transparent 42%, #000 42% 60%, transparent 60%) center / 7px 7px no-repeat;
}
.body { display: flex; flex: 1; min-height: 0; border-bottom: 1px solid #000; }
.panel .body { border-top: 1px solid #a0a0a0; border-left: 1px solid #a0a0a0; }
.view { flex: 1; min-width: 0; overflow: hidden; background: #fff; }

.scroll { display: flex; flex: none; flex-direction: column; width: 16px; padding: 0 1px 0 0; background: #efefef; }
.arrow { display: grid; flex: none; place-items: center; height: 17px; }
.arrow::before { content: ""; border: 4px solid transparent; border-top: 0; border-bottom: 4px solid #444; }
.arrow.dn::before { border-top: 4px solid #444; border-bottom: 0; }
.track { display: flex; flex: 1; flex-direction: column; padding-top: 1px; }
.track.end { justify-content: flex-end; }
.thumb {
  border: 1px solid #999;
  border-radius: 2px;
  background:
    repeating-linear-gradient(#666 0 1px, transparent 1px 3px) center / 7px 9px no-repeat,
    linear-gradient(90deg, #f4f4f4, #dcdcdc 50%, #c4c4c8);
}
.t-quotes { height: 93px; }
.t-nav { height: 87px; }
.t-report { height: 136px; }

.tabs { display: flex; flex: none; align-items: flex-start; height: 24px; padding-left: 2px; }
.tabs button {
  margin-top: 3px;
  padding: 0 10px;
  border-right: 1px solid #777;
  color: #777;
  line-height: 14px;
}
.tabs .active {
  height: 20px;
  margin-top: -1px;
  padding: 2px 11px 0 10px;
  border: 1px solid #000;
  border-top: 0;
  background: #fff;
  color: #000;
  box-shadow: 1px 1px #999;
}
.tabs .before { border-right-color: transparent; }

/* Quotes */
table { width: 100%; border-collapse: collapse; table-layout: fixed; }
td, th { padding: 0; overflow: hidden; font-weight: normal; white-space: nowrap; }
.c-sym { width: 111px; }
.c-bid { width: 73px; }
.quotes th {
  height: 24px;
  padding: 0 4px 0 6px;
  border-right: 1px solid #e2e2e4;
  border-bottom: 1px solid #c8c8c8;
  background: linear-gradient(#fff 40%, #f1f2f4 40%);
  text-align: right;
}
.quotes th:first-child { text-align: left; }
.quotes td {
  height: 20px;
  padding: 0 3px 0 4px;
  border-right: 1px solid #c0c0c0;
  border-bottom: 1px solid #c0c0c0;
  background: #f0fff0;
  color: #0000c8;
  text-align: right;
}
.quotes td:last-child { border-right-color: transparent; }
.quotes .down td { color: #c81010; }
.quotes td:first-child { color: #000; text-align: left; }
.quotes svg { width: 12px; height: 12px; margin-right: 4px; vertical-align: -3px; }
.quotes .sel td, .quotes .sel td:first-child { background: #3399ff; color: #fff; border-bottom-color: #3399ff; }

/* Tree */
.tree { --mark: #f2cf4e; --edge: #a8821c; }
.off { --mark: #a0a0a0; --edge: #707070; }
.tree svg { flex: none; width: 18px; height: 18px; }
.root {
  background: repeating-linear-gradient(#888 0 1px, transparent 1px 2px) 13px 0 / 1px 100% no-repeat;
}
.root.last { background-size: 1px 9px; }
.node, .root li { display: flex; align-items: center; height: 18px; white-space: nowrap; }
.node { gap: 4px; padding-left: 9px; }
.node .box { margin-right: 3px; }
.box {
  flex: none;
  width: 9px;
  height: 9px;
  border: 1px solid #8a96a6;
  background: linear-gradient(#33508c, #33508c) center / 5px 1px no-repeat, #fff;
}
.box.plus {
  background:
    linear-gradient(#33508c, #33508c) center / 5px 1px no-repeat,
    linear-gradient(#33508c, #33508c) center / 1px 5px no-repeat, #fff;
}
.root li {
  gap: 4px;
  padding-left: 47px;
  background:
    repeating-linear-gradient(#888 0 1px, transparent 1px 2px) 34px 0 / 1px 100% no-repeat,
    repeating-linear-gradient(90deg, #888 0 1px, transparent 1px 2px) 34px 9px / 11px 1px no-repeat;
}
.root li:last-child {
  background:
    repeating-linear-gradient(#888 0 1px, transparent 1px 2px) 34px 0 / 1px 10px no-repeat,
    repeating-linear-gradient(90deg, #888 0 1px, transparent 1px 2px) 34px 9px / 11px 1px no-repeat;
}
.root .folder { padding-left: 30px; }
.folder .box { margin-right: 4px; }

/* Chart */
.chart {
  display: grid;
  flex: 1;
  grid-template: minmax(0, 1fr) 20px / minmax(0, 1fr) 46px;
  min-width: 0;
  padding: 1px 0 0 1px;
  border: 2px solid #6a6a6a;
  border-width: 2px 0 0 2px;
  margin-right: 1px;
  background: #f9fad2;
  font: 9px/12px "DejaVu Sans Condensed", "Noto Sans", sans-serif;
}
.plot { position: relative; border: 1px solid #000; }
.candles { display: block; width: 100%; height: 100%; }
.legend { position: absolute; top: 2px; left: 3px; display: flex; align-items: center; gap: 4px; }
.legend::before { content: ""; border: 4px solid transparent; border-top: 4px solid #000; border-bottom: 0; }
.shiftmark {
  position: absolute;
  top: 0;
  right: 307px;
  border: 5px solid transparent;
  border-top-color: #b0b0b0;
  border-bottom: 0;
}
.startmark {
  position: absolute;
  bottom: 0;
  left: 0;
  border: 3px solid #aaa;
  border-top-color: transparent;
  border-right-color: transparent;
}
.prices {
  display: flex;
  flex-direction: column;
  justify-content: space-between;
  padding: 31px 0 6px;
}
.prices span { display: flex; align-items: center; gap: 4px; }
.prices span::before { content: ""; width: 2px; height: 1px; background: #000; }
.times { display: flex; grid-column: 1 / -1; overflow: hidden; padding-left: 1px; }
.times span { flex: none; width: 64px; white-space: nowrap; }
.times span::before { content: ""; display: block; width: 1px; height: 3px; background: #000; }

/* Tester */
.tester {
  display: flex;
  flex: none;
  height: 243px;
  padding: 4px 5px 0 1px;
  border-left: 1px solid #33475c;
}
.side { display: flex; flex: none; flex-direction: column; width: 13px; }
.side .x { width: 11px; flex: none; }
.side h2 {
  flex: 1;
  width: 12px;
  margin-top: 8px;
  padding-bottom: 3px;
  background: linear-gradient(#d8e4f1, #b9cadb);
  color: #46586b;
  font-family: "DejaVu Sans Condensed", sans-serif;
  line-height: 12px;
  text-align: left;
  writing-mode: sideways-lr;
}
.report {
  display: flex;
  flex: 1;
  flex-direction: column;
  min-width: 0;
  border-top: 1px solid #888;
  border-left: 1px solid #888;
}
.stats td { height: 20px; padding: 0; border-bottom: 1px solid #c0c0c0; }
.stats tr:nth-child(odd) { background: #ebebeb; }
.stats td:nth-child(odd) { padding-left: 8px; }
.stats td:nth-child(even) { padding-right: 40px; text-align: right; }
.stats td:nth-child(6) { padding-right: 4px; }
.s1 { width: 18%; }
.s2 { width: 15.7%; }
.s3 { width: 18%; }
.s4 { width: 16%; }
.s5 { width: 18%; }
.stats .quality { padding: 0 2px 0 6px; }
.bar { height: 17px; border: 1px solid #38a890; background: #00ff00; }

/* Status bar */
.status {
  display: flex;
  flex: none;
  align-items: center;
  height: 24px;
  border-top: 1px solid #999;
  border-left: 1px solid #33475c;
}
.status span { height: 18px; padding-left: 5px; border-left: 1px solid #999; line-height: 18px; white-space: nowrap; }
.status .hint { flex: 1; padding-left: 0; border-left: 0; }
.w-profile { width: 116px; }
.w-date { width: 102px; }
.w-price { width: 70px; }
.w-vol { width: 66px; }
.w-net { width: 130px; }
.w-net svg { width: 24px; height: 14px; margin-right: 4px; vertical-align: -3px; }
```
FILE: chart.js
```js
// Bars are written as  kind body-top : body-bottom ^high vlow.
// u = rising (hollow), d = falling (solid), n = open equals close.
// Values are thirds of a pixel below the segment's own top.
const SEGMENTS = [
  [279, `u229:286 d229:277 d277:328 d328:355 u328:355 u298:328^292 n307v344 d298:307^286v328 u313:319^307 d298:307v313
n319^313v355 d328:364v401 u235:370^205 d235:262^199v292 d286:364v385 n355^337v385 d343:355v364 u355:364 n355^313v364 d355:364^343
u328:334^271v343 u241:349v364 d235:256^184 d256:262^241 u229:262^220v292 n229^169v235 d205:235^193 d235:250^229v271 u262:271^235v277 u235:277^229
d220:286 d286:292^235 d292:355v370 u286:355^262v364 u127:256^112 d148:184v235 u169:193^163v235 u169:178 n178v184 u169:178
d178:241 d241:307^235v313 n307^277 u298:307^262 n298^271v313 d307:349^298v364 u307:349 d307:370^298 d364:421^343 u355:421v448
u334:355 d349:385^334 d385:406^334 d400:484^391 u469:484^433 d469:505 d520:619 u613:628 d619:649^613v655 d655:697^619v712
u691:712^676 u661:676^649 d661:718 d712:718 d718:727v763 u670:712^661v727 d670:712 d706:769 d775:784 n784^775
u733:784 u706:748v784 d670:763^604 u691:763^685 d670:706^592 u655:706 d676:718v727 u712:718^691v763 u571:712^514 d571:592^520v628
u577:583v649 u520:577v628 u457:520^448 u412:463^385v499 u334:406^292 u328:334^277v343 d343:349^277v355 n343^334 u292:349^286v376 d250:292^241v298
u250:292 d214:220^178v229 u199:220^85v229 u184:199^163v220 u64:184^34 u22:85 d-8:121^-23 d121:169^112v178 u70:163^49v178`],
  [189, `u319:334^241v355 u205:319 d199:406v433 u391:412v448 u391:397^325 d397:448^391v511 u148:448^121v454 d163:256^55 d211:262^184 d262:304^256v391
u268:304^235v334 d256:361^247 d376:439v490 d433:541v547 d541:655^532v661 u625:655^619v661 u499:625^490v655 u490:499^463v532 d490:682v697 u604:682^547
u541:604^505 d547:568 u433:526^427 d418:454v475 d454:475^433 d469:505^439v520 d499:619v625 d625:676^619v682 d676:691^568v712 d691:811^613v841
u748:775^712 u691:733^640v748 d691:760v811 u739:754^727v811 d748:868 d868:1054 n1045^997v1081 u853:1054^826 d853:883^847v919 d853:931^754v961
d925:1012^853v1024 d1003:1069^967v1096 u982:1069v1075 u775:940 d775:925^760v955 u796:925^697 d790:868^718 d868:976v988 d982:1024^976v1045 d1003:1102^988
d1102:1153^1069v1168 d1153:1168^1126v1204 d1159:1225^1096 u1225:1240^1216v1288 d1225:1231v1288 n1252^1225v1345 u1231:1246^1195 u1174:1216^1159v1231 n1174^1075 d1174:1183^1138
d1183:1267v1273 d1273:1354^1225v1396 u1225:1345^1210v1354 u1168:1225^1024 n1168 u1117:1168^1102 d1102:1282 u1138:1297^1132 d1153:1225^1111 u1174:1225^1159v1240
u1159:1174^1147v1216 d1153:1159^1132v1216 d1168:1339^1159v1354 u1297:1339^1252v1366 u1225:1297^1216 u1210:1231v1261 u1168:1204^1075v1216 u1102:1174v1216 n1102^1054 d1102:1183^1090
u1033:1159^1024 u1003:1039^988v1045 u955:988^931v1024 d955:1033v1039 n1033^1024v1039 u976:1039^967 u910:976^874v982 d910:988v997 d982:1045^940v1081 u961:1039^955v1060
u910:967v1039 u904:919^847v955 d910:961v982 u910:961^874 d889:904^874v940 n910^889v961 u904:919v982 d904:925^883v961 n925^898v967 d925:946^919v967 u931:946v997`],
  [99, `d1201:1309^1195 u1303:1324^1273v1381 u1159:1294v1303 d1159:1195^1132v1201 u1039:1195^1018 u952:1039^883 u946:973^904v982 u883:940^874v952 u874:883^868v925 u817:874^745v883
d802:895^775v910 u688:889^646v895 u433:703^382v754 u283:424v448 d283:505v511 u283:505^253v526 d298:481v511 d481:505^448 u454:505^382 u397:454^334
u310:397^304v454 d310:319^253v382 u220:319^205v382 u91:220^61v232 d76:148v190 d139:163^112v184 d163:211^148v220 u205:211^190v232 d205:226^154v241 d253:346v382
u319:340^277v346 d319:334^283 d319:403^283v424 d403:454^367v532 u391:460^340 d403:454v460 u340:448v460 d340:448^268v475 n448^418v511 u382:454
u283:382^268 u232:262^205v325 d232:277^205v310 d283:454v469 u367:439^361v460 u355:376v424 d391:454^340v460 d439:460^403v481 d454:475v526 d490:547v595
u496:538^481 d481:496^418 d490:496^439v538 d496:589^475v595 d589:595^562 d595:646^547v697 d652:718^610 n718^688v754 n724^697v739 d739:745^718v754
d745:796^703v838 u781:790^718v826 u760:775^754v826 u538:760 d532:583v676 n583v589 n583v604 d583:610v619 u583:610v652 d583:667
u646:661^631v709 u631:646^574 u583:631^568v646 d583:733^574v745 d724:754^697 u724:739^703v775 d724:769v811 d769:775^754v781 d760:775^718 u718:775^709
n718^661 u640:709v775 u625:652^619v667 n625^574v697 d625:640v697 u532:619v625 d496:547^469 d526:538v589 u304:526v532 n310^253v319`],
  [39, `u298:484^277v490 d292:343^286v406 d343:349^313v406 u328:349^298v364 u271:343^220v349 u220:277^43v286 d220:229v262 d220:235v286 u229:235^220v241 d235:241^214
d241:307^229 d307:412^298v433 u349:406^334v412 d343:448^328 d457:505^448v520 u520:526v613 u433:514^421v526 u442:448^391v463 u334:448^328v457 u220:343^214v391
d220:292^178v307 d292:463^256 d457:463v526 d448:520^433 u334:520^328v583 d334:385v391 u334:364^271 d334:706 u640:661^571 u469:628^463
u457:469^448v490 d457:469^433v484 u385:442v457 d376:385^334 u334:385v448 d334:391^271 d400:421^391v463 d421:520^406 d520:640^499 d640:649^604v670
u628:649^583 u391:571^385 u364:400^241 d364:400v448 d391:448^376v457 d457:634v640 n640^598v697 d649:769^592v775 u583:775^535 d583:832
d862:1012^832v1069 d1006:1033^955v1063 n1048^982v1069 u955:1027^940v1048 d982:1012v1054 d1006:1018^925 u991:1006^934 d991:1063 d1054:1111^1048 u991:1111^982
d997:1027^982v1039 d1027:1054v1105 n1054^1039v1090 u1048:1054^997 d1054:1090v1096 n1090^1084v1120 u1006:1090^955v1111 d1006:1177v1240 d1168:1324^1111v1369 d1324:1405^1261v1417
u1303:1405v1411 u1312:1318^1303v1333 d1303:1312v1318 u1282:1318v1339 u1297:1303^1162v1360 u1189:1303 n1189^1183 n1189^1183 u1183:1189^1168v1234 u1177:1183^1162v1219
u1111:1162v1183 u1105:1120^1039 u982:1105 d991:1048^982v1069 d1075:1111^1048v1141 u1006:1075v1111 d1012:1063^991 u1048:1063^1039 u982:1033^976v1048 u934:982^883v991
d925:982^913 n976v1054 n982^949v997 u841:982v991 d820:877^775v904 d868:940^841 d940:1069v1096`]
];

const STEP = 4;
let solid = '';
let hollow = '';
let column = 0;

const block = (x, y, w, h) => `M${x} ${y}h${w}v${h}h${-w}z`;

for (const [top, text] of SEGMENTS) {
  for (const bar of text.split(/\s+/)) {
    const [, kind, a, b, high, low] = bar.match(/^([udn])(-?\d+)(?::(\d+))?(?:\^(-?\d+))?(?:v(\d+))?$/);
    const y = value => top + Math.floor(value / 3);
    const bodyTop = y(a);
    const bodyEnd = y(b ?? a) + 1;
    const x = column * STEP;
    solid += block(x - 1, bodyTop, 3, bodyEnd - bodyTop);
    if (high !== undefined) solid += block(x, y(high), 1, bodyTop - y(high));
    if (low !== undefined) solid += block(x, bodyEnd, 1, Math.max(0, y(low) + 1 - bodyEnd));
    if (kind === 'u') hollow += block(x, bodyTop + 1, 1, Math.max(1, bodyEnd - bodyTop - 2));
    column++;
  }
}

document.getElementById('candles').innerHTML =
  `<g shape-rendering="crispEdges"><path d="${solid}"/><path d="${hollow}" fill="#fff"/></g>`;

const prices = document.getElementById('prices');
for (let p = 130785; p >= 130515; p -= 15) {
  const label = document.createElement('span');
  label.textContent = (p / 100000).toFixed(5);
  prices.append(label);
}

const times = document.getElementById('times');
for (let i = 0; i < 25; i++) {
  const minutes = 4 * 60 + 49 + i * 16;
  const label = document.createElement('span');
  const clock = String(Math.floor(minutes / 60)).padStart(2, '0') + ':' + String(minutes % 60).padStart(2, '0');
  label.textContent = i === 0 ? '27 Jul 2018' : '27 Jul ' + clock;
  times.append(label);
}
```
